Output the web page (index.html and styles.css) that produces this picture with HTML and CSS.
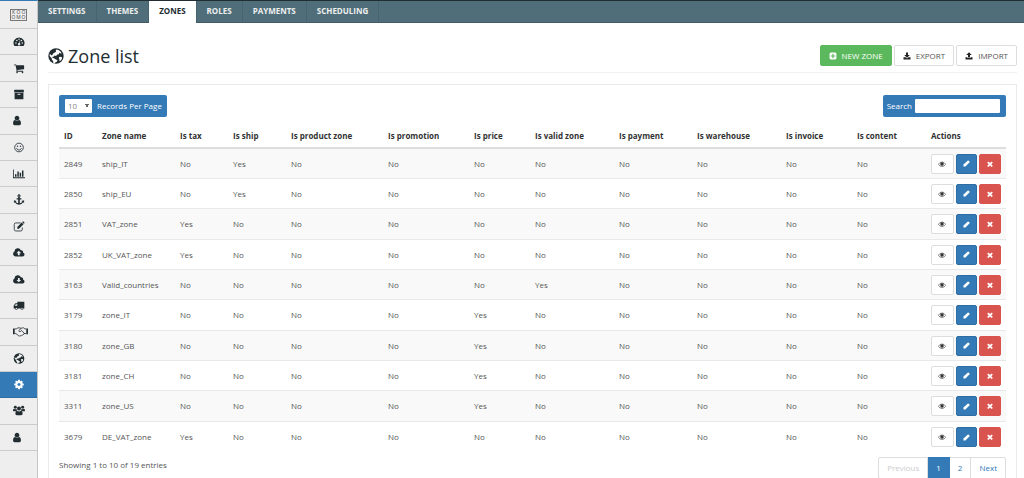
FILE: index.html
```html
<!DOCTYPE html>
<html lang="en">
<head>
<meta charset="utf-8">
<title>Zone list</title>
<link rel="stylesheet" href="styles.css">
</head>
<body>
<svg class="sprite" aria-hidden="true">
  <symbol id="i-dash" viewBox="0 0 16 16"><path fill-rule="evenodd" d="M8 2a8 8 0 0 0-6.800 12.200q.3.400.8.400h12q.5 0 .8-.4A8 8 0 0 0 8 2zM3.500 9a1.100 1.100 0 1 1-1.100 1.100A1.100 1.100 0 0 1 3.500 9zM4.900 5.300a1.100 1.100 0 1 1-1.100 1.100 1.100 1.100 0 0 1 1.100-1.100zM8 3.700a1.100 1.100 0 1 1-1.100 1.100A1.100 1.100 0 0 1 8 3.700zM11.600 5.300a1.100 1.100 0 1 1-1.100 1.100 1.100 1.100 0 0 1 1.100-1.100zM12.700 9a1.100 1.100 0 1 1-1.100 1.100A1.100 1.100 0 0 1 12.700 9zM9.200 6.700l.8.200-.9 3.700A1.700 1.700 0 1 1 8.300 10.300z"/></symbol>
  <symbol id="i-cart" viewBox="0 0 1792 1792"><path d="M704 1536q0 52-38 90t-90 38-90-38-38-90 38-90 90-38 90 38 38 90zm896 0q0 52-38 90t-90 38-90-38-38-90 38-90 90-38 90 38 38 90zm128-1088v512q0 24-16.500 42.500t-40.500 21.500l-1044 122q13 60 13 70 0 16-24 64h920q26 0 45 19t19 45-19 45-45 19h-1024q-26 0-45-19t-19-45q0-11 8-31.500t16-36 21.500-40 15.500-29.500l-177-823h-204q-26 0-45-19t-19-45 19-45 45-19h256q16 0 28.500 6.500t19.500 15.500 13 24.500 8 26 5.500 29.500 4.500 26h1201q26 0 45 19t19 45z"/></symbol>
  <symbol id="i-box" viewBox="0 0 16 16"><path fill-rule="evenodd" d="M1.500 1h13q.5 0 .5.500V4.700q0 .5-.5.500h-13Q1 5.200 1 4.700V1.500Q1 1 1.500 1zM1.600 5.800h12.800v8.700q0 .500-.5.500H2.100q-.5 0-.5-.5zM6.500 7a.7.700 0 0 0 0 1.500h3a.7.700 0 0 0 0-1.500z"/></symbol>
  <symbol id="i-user" viewBox="0 0 1792 1792"><path d="M1536 1399q0 109-62.500 187t-150.500 78h-854q-88 0-150.500-78t-62.500-187q0-85 8.500-160.500t31.500-152 58.500-131 94-89 134.500-34.500q131 128 313 128t313-128q76 0 134.500 34.500t94 89 58.500 131 31.500 152 8.500 160.500zm-256-887q0 159-112.500 271.500t-271.500 112.500-271.500-112.500-112.500-271.500 112.500-271.500 271.500-112.500 271.500 112.500 112.500 271.500z"/></symbol>
  <symbol id="i-smile" viewBox="0 0 16 16"><circle cx="8" cy="8" r="6.300" fill="none" stroke="currentColor" stroke-width="1.200"/><circle cx="5.800" cy="6" r="1.050"/><circle cx="10.200" cy="6" r="1.050"/><path d="M4.600 9.400a3.600 3.600 0 0 0 6.800 0" fill="none" stroke="currentColor" stroke-width="1.200" stroke-linecap="round"/></symbol>
  <symbol id="i-chart" viewBox="0 0 18 16"><path d="M0 2h1.200v11.800H18V15H0zM3 9h2.200v4H3zM6.500 5h2.200v8H6.500zM10 7h2.200v6H10zM13.500 3.500h2.200V13h-2.200z"/></symbol>
  <symbol id="i-anchor" viewBox="0 0 16 16"><path fill-rule="evenodd" d="M8 .5a2.300 2.300 0 0 1 1.200 4.200V6H11.500v2H9.200v5.300q2.600-.4 3.500-2l-1.300-1.200 4-1v4l-1.300-1Q12.200 15.500 8 15.500T1.900 12.100l-1.300 1v-4l4 1-1.300 1.200q.9 1.600 3.500 2V8H4.500V6H6.800V4.700A2.300 2.300 0 0 1 8 .5zm0 1.500a.8.800 0 1 0 0 1.600A.8.800 0 0 0 8 2z"/></symbol>
  <symbol id="i-edit" viewBox="0 0 16 16"><path d="M10.500 2.800H3.300A2.200 2.200 0 0 0 1.100 5v7.300a2.200 2.200 0 0 0 2.200 2.200h7.300a2.200 2.200 0 0 0 2.200-2.200V9.500" fill="none" stroke="currentColor" stroke-width="1.200"/><path d="M5.500 8.700 12 2.200l2.500 2.500L8 11.200H5.500zM12.600 1.600l.8-.8q.6-.5 1.200 0l1.200 1.200q.5.600 0 1.200l-.8.800z"/></symbol>
  <symbol id="i-up" viewBox="0 0 18 16"><path fill-rule="evenodd" d="M4 14A4 4 0 0 1 2.200 6.500 5 5 0 0 1 11.800 4.700 2.700 2.700 0 0 1 15 8.100 3 3 0 0 1 14.500 14zM8.700 5.500 5.200 9h2.200v3.200H10V9h2.200z"/></symbol>
  <symbol id="i-down" viewBox="0 0 18 16"><path fill-rule="evenodd" d="M4 14A4 4 0 0 1 2.200 6.500 5 5 0 0 1 11.800 4.700 2.700 2.700 0 0 1 15 8.100 3 3 0 0 1 14.500 14zM8.700 12.300 12.200 8.800H10V5.600H7.400v3.200H5.200z"/></symbol>
  <symbol id="i-truck" viewBox="0 0 18 16"><path fill-rule="evenodd" d="M17 2.500v10h-1.500a2 2 0 0 1-4 0H7a2 2 0 0 1-4 0H1V8l2.600-3.200h2.900V2.500zM2.300 8.200h4.200V6H4.200zM5 11.500a1 1 0 1 0 0 2 1 1 0 0 0 0-2zm8.500 0a1 1 0 1 0 0 2 1 1 0 0 0 0-2z"/></symbol>
  <symbol id="i-hands" viewBox="0 0 22 16"><path d="M0 3.500h2.500v8.500H0zM19.500 3.500H22V12h-2.500z"/><path d="M2.500 4.200h2.300l2.400-1.500h3L12 3.500l1.500-.8h2.200l1.700 1.500h2.100M2.500 11h1.700l4.200 3.300q1.300.8 2.300-.1 1.500.7 2.200-.6 1.500.2 1.800-1.200 1.400 0 1.500-1.400h3.300M12 3.500 8.500 6.700q.3 2.200 2.500 1.300l1.800-1.500 4.100 4.500" fill="none" stroke="currentColor" stroke-width="1.200"/></symbol>
  <symbol id="i-globe" viewBox="0 0 16 16"><circle cx="8" cy="8" r="7.700"/><path class="land" d="M8.300 1.600 10.500 2l2 1.400 1.200 2-1 .2-.8-.8-1 .5.200 1-1.800.2-1.300 1.500-1.700-.4L5.300 8.900l-1-.2.300 1.200 1.500.4 1.400 1 2 .9-.7 1.500-1.300.6-.8 1.300-1.300-.4-.3-2.100-1.200-1.400-.2-1.500L2.200 8.700 1.500 7.200l.4-1.500.6.8 1 1 1.100-.8.500-1.300 1.700-.9 1.300-.7-.4-1.100zM10.800 9.200l1.600-.5 1.500.5.100 1.200-1 1.800-1.300 1-.4-1.600z"/></symbol>
  <symbol id="i-cog" viewBox="0 0 1792 1792"><path d="M1152 896q0-106-75-181t-181-75-181 75-75 181 75 181 181 75 181-75 75-181zm512-109v222q0 12-8 23t-20 13l-185 28q-19 54-39 91 35 50 107 138 10 12 10 25t-9 23q-27 37-99 108t-94 71q-12 0-26-9l-138-108q-44 23-91 38-16 136-29 186-7 28-36 28h-222q-14 0-24.500-8.500t-11.500-21.500l-28-184q-49-16-90-37l-141 107q-10 9-25 9-14 0-25-11-126-114-165-168-7-10-7-23 0-12 8-23 15-21 51-66.500t54-70.500q-27-50-41-99l-183-27q-13-2-21-12.500t-8-23.500v-222q0-12 8-23t19-13l186-28q14-46 39-92-40-57-107-138-10-12-10-24 0-10 9-23 26-36 98.500-107.500t94.500-71.500q13 0 26 10l138 107q44-23 91-38 16-136 29-186 7-28 36-28h222q14 0 24.500 8.500t11.500 21.500l28 184q49 16 90 37l142-107q9-9 24-9 13 0 25 10 129 119 165 170 7 8 7 22 0 12-8 23-15 21-51 66.500t-54 70.500q26 50 41 98l183 28q13 2 21 12.500t8 23.500z"/></symbol>
  <symbol id="i-users" viewBox="0 0 18 16"><circle cx="3.500" cy="3" r="2.200"/><circle cx="14.500" cy="3" r="2.200"/><circle cx="9" cy="5" r="3"/><path d="M0 8.300q0-3 1.500-3 2 1.300 4 .3Q5.500 7.500 6.500 8 4.500 8 3.700 9.200H1.300Q0 9.200 0 8.300zM18 8.300q0-3-1.500-3-2 1.300-4 .3 0 1.900-1 2.400 2 0 2.800 1.200h2.400q1.300 0 1.300-.9zM3.600 13q0-4.500 2.400-4.500 3 2 6 0 2.400 0 2.400 4.500 0 2-2 2H5.600q-2 0-2-2z"/></symbol>
  <symbol id="i-plus" viewBox="0 0 1792 1792"><path d="M1408 960v-128q0-26-19-45t-45-19h-320v-320q0-26-19-45t-45-19h-128q-26 0-45 19t-19 45v320h-320q-26 0-45 19t-19 45v128q0 26 19 45t45 19h320v320q0 26 19 45t45 19h128q26 0 45-19t19-45v-320h320q26 0 45-19t19-45zm256-544v960q0 119-84.500 203.500t-203.500 84.500h-960q-119 0-203.500-84.500t-84.500-203.500v-960q0-119 84.500-203.500t203.500-84.500h960q119 0 203.500 84.500t84.500 203.500z"/></symbol>
  <symbol id="i-export" viewBox="0 0 16 16"><path d="M6 1h4v5h3.500L8 11.300 2.500 6H6zM1 10.500h4.300L8 13l2.700-2.500H15V15H1z"/></symbol>
  <symbol id="i-import" viewBox="0 0 16 16"><path d="M8 .5 13.500 6H10v5H6V6H2.500zM1 10.500h4V12h6v-1.500h4V15H1z"/></symbol>
  <symbol id="i-eye" viewBox="0 0 16 16"><path d="M.8 8.500Q3.500 4 8 4t7.200 4.500Q12.500 13 8 13T.8 8.500z" fill="none" stroke="currentColor" stroke-width="1.200"/><circle cx="8" cy="7.800" r="3.500"/></symbol>
  <symbol id="i-pencil" viewBox="0 0 16 16"><path d="M1 15v-4.500L10.500 1.500q1.200-1 2.400 0l1.600 1.600q1 1.200 0 2.400L5.500 15z"/></symbol>
  <symbol id="i-times" viewBox="0 0 1792 1792"><path d="M1490 1322q0 40-28 68l-136 136q-28 28-68 28t-68-28l-294-294-294 294q-28 28-68 28t-68-28l-136-136q-28-28-28-68t28-68l294-294-294-294q-28-28-28-68t28-68l136-136q28-28 68-28t68 28l294 294 294-294q28-28 68-28t68 28l136 136q28 28 28 68t-28 68l-294 294 294 294q28 28 28 68z"/></symbol>
</svg>
<div class="app">
  <aside class="sidebar">
    <a class="logo" href="#" aria-label="Kooomo"><span class="logo-box"><span>K</span><span>O</span><span>O</span><span>O</span><span>M</span><span>O</span></span></a>
    <nav class="side-nav" aria-label="Main">
      <a href="#" aria-label="Dashboard"><svg><use href="#i-dash"/></svg></a>
      <a href="#" aria-label="Orders"><svg><use href="#i-cart"/></svg></a>
      <a href="#" aria-label="Products"><svg><use href="#i-box"/></svg></a>
      <a href="#" aria-label="Customers"><svg class="narrow"><use href="#i-user"/></svg></a>
      <a href="#" aria-label="Feedback"><svg><use href="#i-smile"/></svg></a>
      <a href="#" aria-label="Reports"><svg><use href="#i-chart"/></svg></a>
      <a href="#" aria-label="Anchors"><svg><use href="#i-anchor"/></svg></a>
      <a href="#" aria-label="Content"><svg><use href="#i-edit"/></svg></a>
      <a href="#" aria-label="Uploads"><svg><use href="#i-up"/></svg></a>
      <a href="#" aria-label="Downloads"><svg><use href="#i-down"/></svg></a>
      <a href="#" aria-label="Shipping"><svg><use href="#i-truck"/></svg></a>
      <a href="#" aria-label="Partners"><svg class="wide"><use href="#i-hands"/></svg></a>
      <a href="#" aria-label="Sites"><svg><use href="#i-globe"/></svg></a>
      <a class="active" href="#" aria-label="Settings"><svg><use href="#i-cog"/></svg></a>
      <a href="#" aria-label="Groups"><svg><use href="#i-users"/></svg></a>
      <a href="#" aria-label="Account"><svg class="narrow"><use href="#i-user"/></svg></a>
    </nav>
  </aside>
  <div class="page">
    <nav class="tabs" aria-label="Sections">
      <a href="#">SETTINGS</a><a href="#">THEMES</a><a class="active" href="#">ZONES</a><a href="#">ROLES</a><a href="#">PAYMENTS</a><a href="#">SCHEDULING</a>
    </nav>
    <main>
      <header class="page-head">
        <h1><svg><use href="#i-globe"/></svg>Zone list</h1>
        <div class="head-actions">
          <button class="btn green"><svg><use href="#i-plus"/></svg>NEW ZONE</button>
          <button class="btn"><svg><use href="#i-export"/></svg>EXPORT</button>
          <button class="btn"><svg><use href="#i-import"/></svg>IMPORT</button>
        </div>
      </header>
      <section class="panel">
        <div class="tools">
          <div class="tool length"><select id="len"><option>10</option><option>25</option><option>50</option></select><label for="len">Records Per Page</label></div>
          <div class="tool search"><label for="q">Search</label><input id="q" type="text"></div>
        </div>
        <table>
          <colgroup><col class="w-id"><col class="w-name"><col class="w-tax"><col class="w-ship"><col class="w-product"><col class="w-promo"><col class="w-price"><col class="w-valid"><col class="w-pay"><col class="w-ware"><col class="w-inv"><col class="w-content"><col class="w-act"></colgroup>
          <thead><tr><th>ID</th><th>Zone name</th><th>Is tax</th><th>Is ship</th><th>Is product zone</th><th>Is promotion</th><th>Is price</th><th>Is valid zone</th><th>Is payment</th><th>Is warehouse</th><th>Is invoice</th><th>Is content</th><th>Actions</th></tr></thead>
          <tbody id="rows"></tbody>
        </table>
        <footer class="table-foot">
          <span class="info">Showing 1 to 10 of 19 entries</span>
          <nav class="pager" aria-label="Pagination"><a class="disabled" href="#">Previous</a><a class="current" href="#">1</a><a href="#">2</a><a href="#">Next</a></nav>
        </footer>
      </section>
    </main>
  </div>
</div>
<script src="script.js"></script>
</body>
</html>
```
FILE: styles.css
```css
* { box-sizing: border-box; }
body { margin: 0; font-family: "Open Sans", sans-serif; font-size: 8px; line-height: 12px; color: #555; background: #fff; overflow: hidden; }
a { text-decoration: none; color: inherit; }
button, input, select { font: inherit; color: inherit; margin: 0; }
svg { display: block; fill: currentColor; flex: none; }
.sprite { display: none; }
.land { fill: var(--land, #eee); }

.app { display: flex; min-height: 100vh; }
.sidebar { flex: 0 0 38px; background: #eee; border-top: 1px solid #337ab7; border-right: 1px solid #c6c6c6; color: #222d32; }
.logo { display: flex; justify-content: center; align-items: center; height: 28px; border-bottom: 1px solid #ccc; }
.logo-box { display: grid; grid-template-columns: repeat(3, 5px); line-height: 5px; border: 1px solid #777; font-size: 5px; text-align: center; color: #444; }
.side-nav { display: flex; flex-direction: column; height: 422px; }
.side-nav a { flex: 1; display: flex; align-items: center; justify-content: center; border-bottom: 1px solid #ccc; }
.side-nav svg { width: 12px; height: 11px; }
.side-nav .wide { width: 15px; margin-left: 3px; }
.side-nav .narrow { margin-right: 3px; }
.side-nav .active { background: #337ab7; color: #fff; border-color: #2d6ca2; }

.page { flex: 1; min-width: 0; }
.tabs { display: flex; height: 23px; background: #4f6e7a; border-top: 1px solid #222d32; border-bottom: 1px solid #415c67; }
.tabs a { padding: 4px 10px 5px; border-right: 1px solid #456470; color: #eee; font-weight: 700; }
.tabs .active { background: #fff; color: #222d32; margin-bottom: -1px; }

main { padding: 0 7px 0 10px; }
.page-head { display: flex; align-items: center; justify-content: space-between; height: 50px; padding-top: 17px; padding-bottom: 1px; border-bottom: 1px solid #f1f1f1; }
h1 { display: flex; align-items: center; gap: 4px; margin: 0; font-size: 18px; line-height: 24px; font-weight: 400; color: #222d32; }
h1 svg { width: 16px; height: 16px; --land: #fff; }
.head-actions { display: flex; gap: 2px; }
.btn { display: flex; align-items: center; gap: 5px; height: 21px; padding: 0 8px; background: #fff; border: 1px solid #ddd; border-radius: 2px; }
.btn svg { width: 8px; height: 8px; color: #222; }
.green { background: #5cb85c; border-color: #5cb85c; color: #fff; }
.green svg { color: #fff; }

.panel { margin-top: 11px; padding: 10px; border: 1px solid #eaeaea; }
.tools { display: flex; justify-content: space-between; }
.tool { display: flex; align-items: center; gap: 5px; height: 22px; background: #337ab7; border-radius: 2px; color: #fff; }
.length { padding: 0 5px 0 6px; }
.search { padding: 0 6px 0 4px; gap: 3px; }
.tool select { width: 27px; height: 14px; padding: 0 3px; appearance: none; border: 0; border-radius: 1px; color: #888; background: #fff conic-gradient(from -30deg at 50% 100%, #666 60deg, transparent 0) no-repeat 20px 5px / 4px 4px; }
.tool input { width: 85px; height: 14px; padding: 0 3px; border: 0; border-radius: 1px; background: #fff; color: #555; }

table { width: 100%; table-layout: fixed; border-collapse: separate; border-spacing: 0; margin-top: 6px; }
th, td { padding: 0 5px; text-align: left; white-space: nowrap; }
th { height: 26px; padding-top: 1px; border-bottom: 2px solid #ddd; color: #333; font-weight: 700; }
td { height: 30px; border-bottom: 1px solid #e8e8e8; }
tr:nth-child(3n) td { height: 31px; }
tbody tr:nth-child(odd) { background: #f9f9f9; }
tbody tr:last-child { background: #fff; }
tbody tr:last-child td { border-bottom: 0; }
.w-id { width: 38px; } .w-name { width: 78px; } .w-tax { width: 53px; } .w-ship { width: 58px; }
.w-product { width: 97px; } .w-promo { width: 86px; } .w-price { width: 61px; } .w-valid { width: 84px; }
.w-pay { width: 78px; } .w-ware { width: 89px; } .w-inv { width: 71px; } .w-content { width: 74px; } .w-act { width: 80px; }
.row-actions { display: flex; gap: 2px; }
.icon-btn { display: flex; align-items: center; justify-content: center; width: 22px; height: 20px; padding: 0; border: 1px solid #ddd; border-radius: 2px; background: #fff; color: #333; }
.icon-btn svg { width: 8px; height: 8px; }
.icon-btn.view { width: 23px; }
.edit { background: #337ab7; border-color: #2e6da4; color: #fff; }
.icon-btn.edit svg { width: 7px; height: 7px; }
.delete { background: #d9534f; border-color: #d9534f; color: #fff; }

.table-foot { display: flex; justify-content: space-between; padding-top: 5px; }
.info { padding-top: 2px; }
.pager { display: flex; color: #337ab7; }
.pager a { padding: 4px 8px; border: 1px solid #ddd; border-left-width: 0; }
.pager a:first-child { border-left-width: 1px; border-radius: 2px 0 0 2px; }
.pager a:last-child { border-radius: 0 2px 2px 0; }
.pager .disabled { color: #ccc; }
.pager .current { background: #337ab7; border-color: #337ab7; color: #fff; }
```
FILE: script.js
```js
const columns = ["tax", "ship", "product", "promotion", "price", "valid", "payment", "warehouse", "invoice", "content"];
const zones = [
  [2849, "ship_IT", "ship"],
  [2850, "ship_EU", "ship"],
  [2851, "VAT_zone", "tax"],
  [2852, "UK_VAT_zone", "tax"],
  [3163, "Valid_countries", "valid"],
  [3179, "zone_IT", "price"],
  [3180, "zone_GB", "price"],
  [3181, "zone_CH", "price"],
  [3311, "zone_US", "price"],
  [3679, "DE_VAT_zone", "tax"]
];
const button = (kind, label, icon) =>
  `<button class="icon-btn ${kind}" aria-label="${label}"><svg><use href="#${icon}"/></svg></button>`;
const actions = button("view", "View", "i-eye") + button("edit", "Edit", "i-pencil") + button("delete", "Delete", "i-times");
document.getElementById("rows").innerHTML = zones.map(([id, name, type]) =>
  `<tr><td>${id}</td><td>${name}</td>${columns.map(c => `<td>${c === type ? "Yes" : "No"}</td>`).join("")}<td><div class="row-actions">${actions}</div></td></tr>`
).join("");
```
